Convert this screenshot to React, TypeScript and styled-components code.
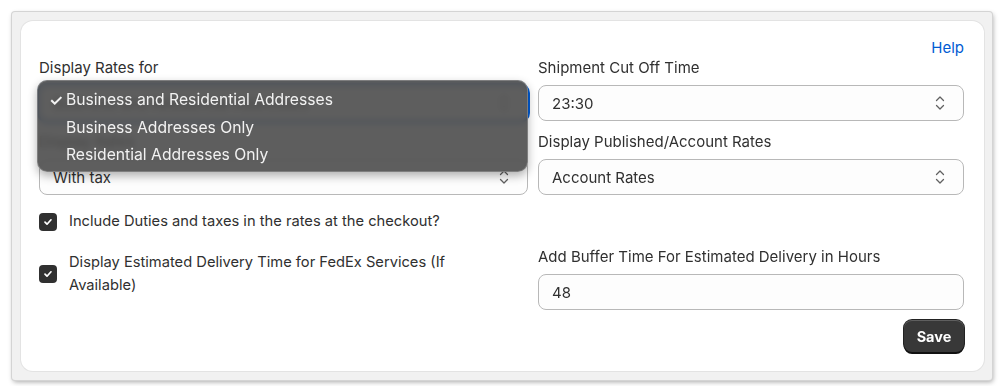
import styled, { createGlobalStyle } from "styled-components";

const GlobalStyle = createGlobalStyle`
  body {
    margin: 0;
    background: #ffffff;
    font-family: Inter, "Noto Sans", sans-serif;
    color: #303030;
  }
`;

const Frame = styled.div`
  margin: 12px;
  width: 980px;
  height: 368px;
  box-sizing: border-box;
  padding: 9px 8px 9px 9px;
  background: #f1f1f1;
  border-radius: 3px;
  box-shadow: 0 0 0 1px #d4d4d4, 1px 2px 5px rgba(0, 0, 0, 0.35);
`;

const Card = styled.div`
  height: 100%;
  box-sizing: border-box;
  background: #ffffff;
  border-radius: 12px;
  box-shadow: 0 0 0 1px #e3e3e3;
  padding: 17px 20px 0 18px;
`;

const HelpRow = styled.div`
  display: flex;
  justify-content: flex-end;
  height: 20px;
`;

const HelpLink = styled.a`
  color: #005bd3;
  font-size: 15px;
  line-height: 20px;
  text-decoration: none;
`;

const Columns = styled.div`
  display: grid;
  grid-template-columns: 489px 426px;
  column-gap: 10px;
`;

const Column = styled.div`
  display: flex;
  flex-direction: column;
  position: relative;
`;

const Field = styled.div<{ $top?: number }>`
  display: flex;
  flex-direction: column;
  gap: 7px;
  margin-top: ${(p) => p.$top ?? 0}px;
`;

const Label = styled.label`
  font-size: 15px;
  line-height: 20px;
`;

const SelectBox = styled.div<{ $focused?: boolean }>`
  height: 36px;
  box-sizing: border-box;
  display: flex;
  align-items: center;
  justify-content: space-between;
  padding: 0 18px 0 13px;
  border-radius: 8px;
  background: #fdfdfd;
  border: 1px solid #b8b8b8;
  font-size: 15px;
  box-shadow: ${(p) => (p.$focused ? "0 0 0 2px #005bd3" : "none")};
`;

const Chevrons = () => (
  <svg width="10" height="16" viewBox="0 0 10 16" fill="none">
    <path d="M1.5 5.5 5 2l3.5 3.5M1.5 10.5 5 14l3.5-3.5" stroke="#616161" strokeWidth="1.3" strokeLinecap="round" strokeLinejoin="round" />
  </svg>
);

const CheckRow = styled.div<{ $top: number }>`
  display: flex;
  align-items: center;
  gap: 12px;
  margin-top: ${(p) => p.$top}px;
  font-size: 14.7px;
  line-height: 23px;
`;

const Box = styled.span`
  flex: none;
  width: 18px;
  height: 18px;
  border-radius: 4px;
  background: #303030;
  display: flex;
  align-items: center;
  justify-content: center;
`;

const CheckText = styled.span`
  max-width: 420px;
`;

const Checkbox = ({ top, children }: { top: number; children: string }) => (
  <CheckRow $top={top}>
    <Box>
      <svg width="12" height="12" viewBox="0 0 12 12" fill="none">
        <path d="M3 6.2 5 8.2 9 3.8" stroke="#fff" strokeWidth="1.7" strokeLinecap="round" strokeLinejoin="round" />
      </svg>
    </Box>
    <CheckText>{children}</CheckText>
  </CheckRow>
);

const Footer = styled.div`
  display: flex;
  justify-content: flex-end;
  margin-top: 10px;
`;

const SaveButton = styled.button`
  width: 60px;
  height: 32px;
  border: none;
  border-radius: 8px;
  background: #383838;
  color: #ffffff;
  font-family: Inter, sans-serif;
  font-weight: 700;
  font-size: 14.5px;
  box-shadow: inset 0 1px 0 rgba(255, 255, 255, 0.2), 0 2px 0 #111, 0 0 0 1px #222;
`;

const Menu = styled.div`
  position: absolute;
  left: -2px;
  top: 22px;
  width: 491px;
  height: 92px;
  box-sizing: border-box;
  padding: 5px 0;
  border-radius: 10px;
  background: rgba(76, 76, 76, 0.9);
  backdrop-filter: blur(3px);
  border: 1px solid rgba(150, 150, 150, 0.6);
  box-shadow: 0 4px 10px rgba(0, 0, 0, 0.3);
`;

const MenuItem = styled.div`
  display: flex;
  align-items: center;
  height: 27.5px;
  padding-left: 11px;
  color: #f2f2f2;
  font-size: 15.7px;
`;

const Tick = styled.span`
  width: 17px;
  font-size: 16px;
  font-weight: 600;
`;

const menuOptions = [
  "Business and Residential Addresses",
  "Business Addresses Only",
  "Residential Addresses Only",
];

export default function App() {
  return (
    <>
      <GlobalStyle />
      <Frame>
        <Card>
          <HelpRow>
            <HelpLink href="#">Help</HelpLink>
          </HelpRow>
          <Columns>
            <Column>
              <Field>
                <Label>Display Rates for</Label>
                <SelectBox $focused>
                  Business and Residential Addresses
                  <Chevrons />
                </SelectBox>
              </Field>
              <Field $top={11}>
                <Label>Display Rates</Label>
                <SelectBox>
                  With tax
                  <Chevrons />
                </SelectBox>
              </Field>
              <Checkbox top={15}>Include Duties and taxes in the rates at the checkout?</Checkbox>
              <Checkbox top={18}>Display Estimated Delivery Time for FedEx Services (If Available)</Checkbox>
              <Menu>
                {menuOptions.map((opt, i) => (
                  <MenuItem key={opt}>
                    <Tick>{i === 0 ? "✓" : ""}</Tick>
                    {opt}
                  </MenuItem>
                ))}
              </Menu>
            </Column>
            <Column>
              <Field>
                <Label>Shipment Cut Off Time</Label>
                <SelectBox>
                  23:30
                  <Chevrons />
                </SelectBox>
              </Field>
              <Field $top={11}>
                <Label>Display Published/Account Rates</Label>
                <SelectBox>
                  Account Rates
                  <Chevrons />
                </SelectBox>
              </Field>
              <Field $top={52}>
                <Label>Add Buffer Time For Estimated Delivery in Hours</Label>
                <SelectBox>48</SelectBox>
              </Field>
              <Footer>
                <SaveButton>Save</SaveButton>
              </Footer>
            </Column>
          </Columns>
        </Card>
      </Frame>
    </>
  );
}
